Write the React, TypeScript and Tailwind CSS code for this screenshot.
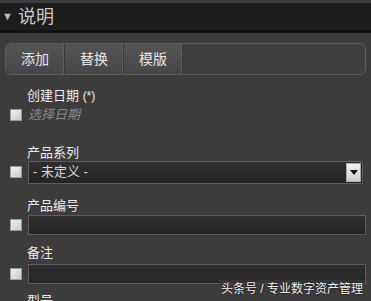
import React from 'react';

const FONT = { fontFamily: '"Liberation Sans", "Noto Sans CJK SC", sans-serif' };

function Checkbox() {
  return (
    <div className="w-[12px] h-[12px] shrink-0 border border-[#9a9a9a] bg-gradient-to-br from-[#f4f4f4] to-[#c8c8c8]" />
  );
}

function Field({ label, children, gap = 0 }: { label: React.ReactNode; children: React.ReactNode; gap?: number }) {
  return (
    <div className="flex flex-col">
      <div className="pl-[27px] text-[13px] leading-[16px] text-[#ececec] h-[16px]">{label}</div>
      <div className={gap ? 'flex items-center h-[22px] mt-[2px]' : 'flex items-center h-[22px]'}>
        <div className="w-[28px] pl-[10px] flex items-center">
          <Checkbox />
        </div>
        {children}
      </div>
    </div>
  );
}

function TextBox() {
  return (
    <div className="flex-1 mr-[5px] h-[20px] border border-[#5e5e5e] bg-gradient-to-b from-[#2e2e2e] to-[#262626]" />
  );
}

export default function App() {
  const tabs = ['添加', '替换', '模版'];
  return (
    <div className="w-[371px] h-[301px] bg-[#3c3c3c] overflow-hidden relative" style={FONT}>
      {/* header */}
      <div className="mt-[3px] h-[30px] bg-[#1d1d1d] border-b-[3px] border-[#111] flex items-center">
        <span className="ml-[2px] text-[#bdbdbd] text-[11px] leading-none">▼</span>
        <span className="ml-[5px] text-[18px] text-[#c9c9c9] leading-none">说明</span>
      </div>

      {/* toolbar */}
      <div className="mx-[5px] mt-[10px] h-[32px] rounded-[6px] border border-[#5c5c5c] bg-[#3f3f3f] flex overflow-hidden">
        {tabs.map((t) => (
          <div
            key={t}
            className="w-[59px] h-full flex items-center justify-center text-[14px] text-[#e6e6e6] bg-gradient-to-b from-[#545454] to-[#474747] border-r border-[#3a3a3a] shadow-[inset_-1px_0_0_#5e5e5e]"
          >
            {t}
          </div>
        ))}
      </div>

      {/* form */}
      <div className="mt-[13px] flex flex-col">
        <Field
          label={
            <>
              创建日期 <span className="text-[12px]">(*)</span>
            </>
          }
        >
          <span className="text-[13px] italic text-[#8a8a8a]">选择日期</span>
        </Field>

        <div className="mt-[19px]">
          <Field label="产品系列">
            <div className="flex-1 mr-[8px] h-[23px] border border-[#5e5e5e] bg-gradient-to-b from-[#2f2f2f] to-[#242424] flex items-center">
              <span className="ml-[4px] text-[13px] text-[#d8d8d8] flex-1">- 未定义 -</span>
              <div className="w-[15px] h-[19px] mr-[1px] bg-gradient-to-b from-[#f2f2f2] to-[#cfcfcf] border border-[#aaa] flex items-center justify-center">
                <svg width="8" height="5" viewBox="0 0 8 5">
                  <path d="M0 0 H8 L4 5 Z" fill="#111" />
                </svg>
              </div>
            </div>
          </Field>
        </div>

        <div className="mt-[15px]">
          <Field label="产品编号">
            <TextBox />
          </Field>
        </div>

        <div className="mt-[9px]">
          <Field label="备注" gap={1}>
            <TextBox />
          </Field>
        </div>

        <div className="mt-[8px] pl-[27px] text-[13px] leading-[16px] text-[#ececec]">型号</div>
      </div>

      <div
        className="absolute right-[6px] bottom-[3px] text-[12px] text-[#f2f2f2] bg-[#3c3c3c]/70 px-[2px]"
        style={{ textShadow: '0 0 2px #000' }}
      >
        头条号 / 专业数字资产管理
      </div>
    </div>
  );
}
